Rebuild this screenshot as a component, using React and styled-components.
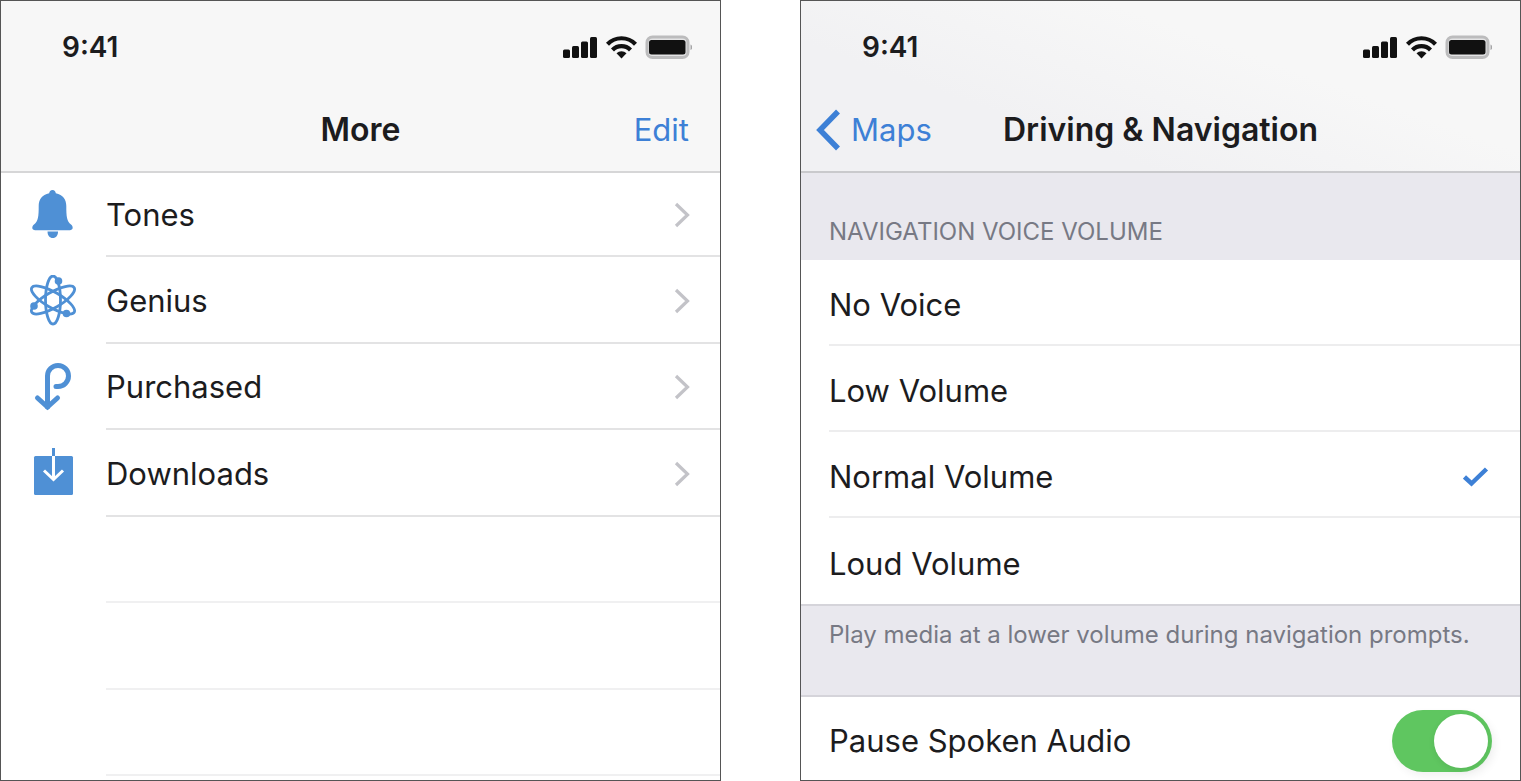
import React, { useState } from "react";
import styled, { createGlobalStyle } from "styled-components";

const colors = {
  text: "#1c1c1e",
  blue: "#3d80d6",
  icon: "#4f90d5",
  bar: "#f7f7f7",
  barTint: "#f1f1f3",
  group: "#e9e8ee",
  line: "#e3e3e4",
  groupLine: "#d5d4da",
  muted: "#777984",
  green: "#5fc660",
};

const GlobalStyle = createGlobalStyle`
  * {
    box-sizing: border-box;
  }
  body {
    margin: 0;
    background: white;
    color: ${colors.text};
    font-family: Inter, "Liberation Sans", sans-serif;
    font-size: 31px;
    line-height: 40px;
  }
`;

/* icons */

const BellIcon = () => (
  <svg width="48" height="52" viewBox="0 0 48 52" fill={colors.icon} aria-hidden="true">
    <path d="M24.500 1c2 0 3.100 1.300 3.300 3.200C35 5.600 38.300 10.500 38.300 17c0 10.500.5 15.300 4.700 18.600 2.600 2.100 2.200 5.700-1.200 5.700H7.200C3.800 41.300 3.400 37.700 6 35.600 10.200 32.300 10.700 27.500 10.700 17c0-6.500 3.300-11.400 10.500-12.800C21.400 2.300 22.500 1 24.500 1z" />
    <path d="M19.500 42.500h10.500c0 4-2 6.500-5.200 6.500s-5.300-2.500-5.300-6.500z" />
  </svg>
);

const GeniusIcon = () => (
  <svg width="48" height="52" viewBox="0 0 48 52" fill="none" stroke={colors.icon} strokeWidth="2.800" aria-hidden="true">
    <ellipse cx="25" cy="25" rx="7.500" ry="24" />
    <ellipse cx="25" cy="25" rx="7.800" ry="24.500" transform="rotate(60 25 25)" />
    <ellipse cx="25" cy="25" rx="7.800" ry="24.500" transform="rotate(-60 25 25)" />
    <g fill={colors.icon} stroke="none">
      <circle cx="30.500" cy="6" r="3.800" />
      <circle cx="6" cy="31" r="3.800" />
      <circle cx="38.500" cy="38.500" r="3.800" />
    </g>
  </svg>
);

const PurchasedIcon = () => (
  <svg width="48" height="52" viewBox="0 0 48 52" fill="none" stroke={colors.icon} strokeWidth="5" strokeLinecap="round" aria-hidden="true">
    <path d="M19.500 46V15a10.500 10.500 0 1 1 10.500 10.500H28" />
    <path d="M9.500 37l10 9 10-9" />
  </svg>
);

const DownloadsIcon = () => (
  <svg width="48" height="52" viewBox="0 0 48 52" fill="none" strokeWidth="3" aria-hidden="true">
    <rect x="6" y="8" width="39" height="39" rx="1.500" fill={colors.icon} />
    <path d="M25.500 0v8" stroke={colors.icon} />
    <path d="M25.500 8v23.500M16 22.500l9.500 9 9.500-9" stroke="white" />
  </svg>
);

const ChevronIcon = () => (
  <svg width="16" height="26" viewBox="0 0 16 26" fill="none" stroke="#c3c3c8" strokeWidth="3.200" aria-hidden="true">
    <path d="M2 2l11.500 11L2 24" />
  </svg>
);

const BackIcon = () => (
  <svg width="26" height="42" viewBox="0 0 26 42" fill="none" stroke={colors.blue} strokeWidth="5.500" aria-hidden="true">
    <path d="M23 2.500L5 21l18 18.500" />
  </svg>
);

const CheckIcon = () => (
  <svg width="26" height="20" viewBox="0 0 26 20" fill="none" stroke={colors.blue} strokeWidth="4.500" aria-hidden="true">
    <path d="M1.500 10l7 6.500L23.500 2" />
  </svg>
);

const StatusIcons = () => (
  <svg width="130" height="24" viewBox="0 0 130 24" fill="#111" aria-hidden="true">
    <rect x="1" y="14.500" width="7" height="8.500" rx="1.500" />
    <rect x="10" y="11" width="7" height="12" rx="1.500" />
    <rect x="19" y="6.500" width="7" height="16.500" rx="1.500" />
    <rect x="28" y="2" width="7" height="21" rx="1.500" />
    <g fill="none" stroke="#111" strokeWidth="4.200">
      <path d="M45.500 9.200a19.500 19.500 0 0 1 28 0" />
      <path d="M50.500 15a12.500 12.500 0 0 1 18 0" />
    </g>
    <path d="M54.500 18.200a7.500 7.500 0 0 1 10 0L59.500 23.500z" />
    <rect x="85" y="2" width="41" height="20.500" rx="5.500" fill="#e4e4e5" stroke="#bcbcbd" strokeWidth="3" />
    <rect x="87" y="5" width="36.500" height="14.500" rx="2.500" />
    <path d="M128.500 9.500c2.400.8 2.400 4.700 0 5.500z" fill="#a5a5a7" />
  </svg>
);

/* components */

function TopBar({ left, title, right, tinted }) {
  return (
    <Header $tinted={tinted}>
      <StatusBar>
        <Time>9:41</Time>
        <StatusIcons />
      </StatusBar>
      <NavBar>
        <NavSide>{left}</NavSide>
        <Title>{title}</Title>
        <NavSide $end>{right}</NavSide>
      </NavBar>
    </Header>
  );
}

const moreItems = [
  { name: "Tones", Icon: BellIcon },
  { name: "Genius", Icon: GeniusIcon },
  { name: "Purchased", Icon: PurchasedIcon },
  { name: "Downloads", Icon: DownloadsIcon },
];

const volumes = ["No Voice", "Low Volume", "Normal Volume", "Loud Volume"];

function MoreScreen() {
  return (
    <Phone>
      <TopBar title="More" right={<NavButton type="button">Edit</NavButton>} />
      <List>
        {moreItems.map(({ name, Icon }) => (
          <ListRow key={name}>
            <ItemLink href="#">
              <Icon />
              <ItemBody>
                {name}
                <ChevronIcon />
              </ItemBody>
            </ItemLink>
          </ListRow>
        ))}
        {[0, 1, 2].map((n) => (
          <ListRow key={n} $empty aria-hidden="true" />
        ))}
      </List>
    </Phone>
  );
}

function NavigationScreen() {
  const [volume, setVolume] = useState("Normal Volume");
  const [pause, setPause] = useState(true);

  return (
    <Phone>
      <TopBar
        tinted
        left={
          <NavButton type="button">
            <BackIcon />
            Maps
          </NavButton>
        }
        title="Driving & Navigation"
      />
      <GroupTitle id="volume-title">NAVIGATION VOICE VOLUME</GroupTitle>
      <Options role="radiogroup" aria-labelledby="volume-title">
        {volumes.map((name) => (
          <Option key={name}>
            <HiddenInput
              type="radio"
              name="volume"
              checked={volume === name}
              onChange={() => setVolume(name)}
            />
            <OptionBody>
              {name}
              {volume === name && <CheckIcon />}
            </OptionBody>
          </Option>
        ))}
      </Options>
      <GroupNote>Play media at a lower volume during navigation prompts.</GroupNote>
      <SwitchRow>
        <label htmlFor="pause">Pause Spoken Audio</label>
        <Switch
          id="pause"
          type="checkbox"
          role="switch"
          checked={pause}
          onChange={(e) => setPause(e.target.checked)}
        />
      </SwitchRow>
    </Phone>
  );
}

export default function App() {
  return (
    <>
      <GlobalStyle />
      <Page>
        <MoreScreen />
        <NavigationScreen />
      </Page>
    </>
  );
}

const Page = styled.main`
  display: grid;
  grid-template-columns: 1fr 1fr;
  gap: 79px;
  height: 100vh;
`;

const Phone = styled.section`
  display: flex;
  flex-direction: column;
  min-width: 0;
  border: 1px solid #555;
  background: white;
  overflow: hidden;
`;

const Header = styled.header`
  flex-shrink: 0;
  padding-top: 22px;
  background: ${(props) =>
    props.$tinted
      ? `linear-gradient(20deg, ${colors.barTint} 30%, ${colors.bar} 65%)`
      : colors.bar};
  border-bottom: 2px solid ${(props) => (props.$tinted ? "#c9c9cc" : "#d6d6d7")};
`;

const StatusBar = styled.div`
  display: flex;
  justify-content: space-between;
  align-items: center;
  height: 48px;
  padding: 0 28px 0 61px;
`;

const Time = styled.span`
  font-size: 28px;
  font-weight: 600;
`;

const NavBar = styled.div`
  display: grid;
  grid-template-columns: 1fr auto 1fr;
  align-items: center;
  height: 100px;
  padding: 18px 14px 0;
`;

const NavSide = styled.div`
  display: flex;
  justify-content: ${(props) => (props.$end ? "flex-end" : "flex-start")};
  padding-right: ${(props) => (props.$end ? "17px" : "0")};
`;

const Title = styled.h1`
  margin: 0;
  font-size: 32px;
  font-weight: 600;
  white-space: nowrap;
`;

const NavButton = styled.button`
  display: flex;
  align-items: center;
  gap: 10px;
  padding: 0;
  border: none;
  background: transparent;
  color: ${colors.blue};
  font: inherit;
  cursor: pointer;
`;

const List = styled.ul`
  margin: 0;
  padding: 0;
  list-style: none;
`;

const ListRow = styled.li`
  height: 86px;
  &:nth-child(even) {
    height: 87px;
  }
  &:first-child {
    height: 84px;
  }
  ${(props) => props.$empty && `
    margin-left: 105px;
    border-bottom: 2px solid #f0f0f1;
  `}
`;

const ItemLink = styled.a`
  display: flex;
  align-items: center;
  gap: 30px;
  height: 100%;
  padding-left: 27px;
  color: inherit;
  text-decoration: none;
`;

const ItemBody = styled.span`
  display: flex;
  flex: 1;
  justify-content: space-between;
  align-items: center;
  height: 100%;
  padding: 2px 30px 0 0;
  border-bottom: 2px solid ${colors.line};
`;

const GroupTitle = styled.h2`
  flex-shrink: 0;
  height: 87px;
  margin: 0;
  padding: 39px 28px 0;
  background: ${colors.group};
  color: ${colors.muted};
  font-size: 24px;
  font-weight: 400;
`;

const Options = styled.div`
  flex-shrink: 0;
  padding-left: 28px;
`;

const Option = styled.label`
  display: block;
  cursor: pointer;
`;

const OptionBody = styled.span`
  display: flex;
  justify-content: space-between;
  align-items: center;
  height: 86px;
  padding: 5px 31px 0 0;
  border-bottom: 2px solid #ededee;
  ${Option}:last-child & {
    border-bottom: none;
  }
`;

const HiddenInput = styled.input`
  position: absolute;
  opacity: 0;
  pointer-events: none;
`;

const GroupNote = styled.p`
  flex-shrink: 0;
  height: 93px;
  margin: 0;
  padding: 9px 28px 0;
  background: ${colors.group};
  border-top: 2px solid ${colors.groupLine};
  border-bottom: 2px solid ${colors.groupLine};
  color: ${colors.muted};
  font-size: 24px;
  white-space: nowrap;
`;

const SwitchRow = styled.div`
  display: flex;
  flex-shrink: 0;
  justify-content: space-between;
  align-items: center;
  height: 87px;
  padding: 0 28px;
`;

const Switch = styled.input`
  appearance: none;
  display: flex;
  justify-content: ${(props) => (props.checked ? "flex-end" : "flex-start")};
  width: 100px;
  height: 62px;
  margin: 0;
  padding: 4px;
  border-radius: 31px;
  background: ${(props) => (props.checked ? colors.green : "#e5e5ea")};
  box-shadow: 3px 4px 8px rgba(0, 0, 0, 0.06);
  cursor: pointer;
  &::before {
    content: "";
    width: 54px;
    height: 54px;
    border-radius: 50%;
    background: white;
    box-shadow: 0 2px 6px rgba(0, 0, 0, 0.08);
  }
`;
